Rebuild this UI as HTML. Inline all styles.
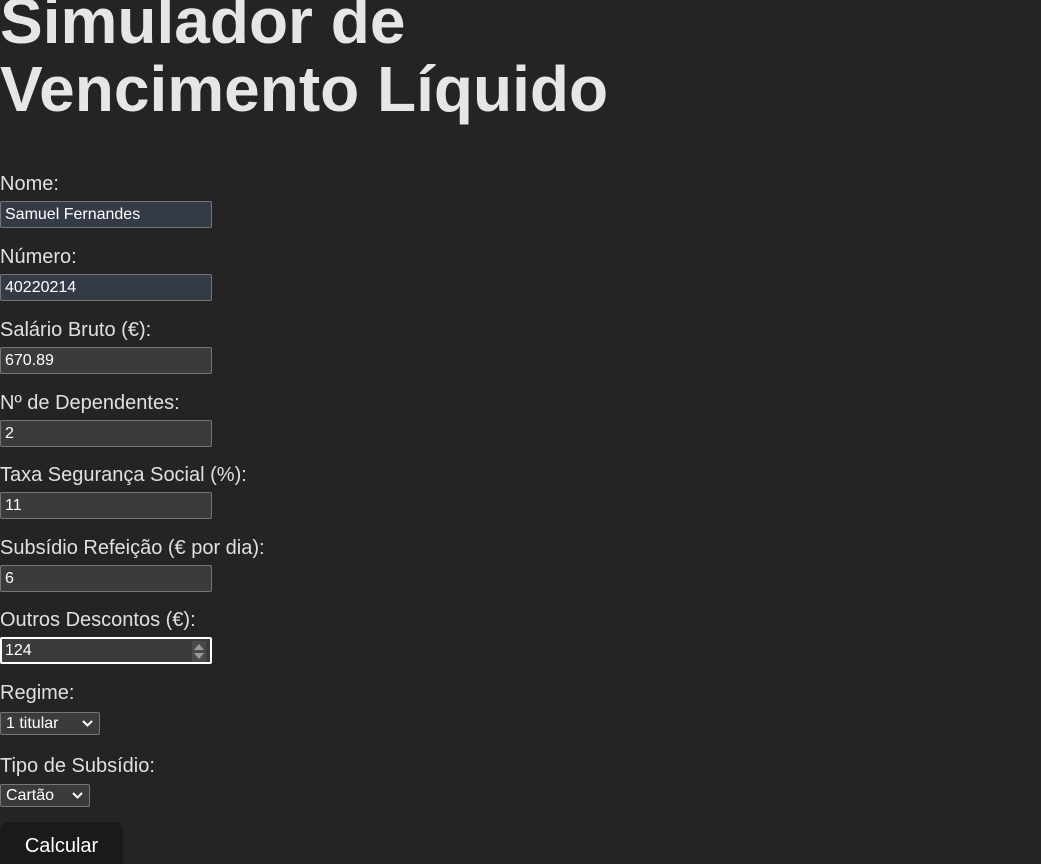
<!DOCTYPE html>
<html><head><meta charset="utf-8"><style>
html,body{margin:0;background:#242424;overflow:hidden;width:1041px;height:864px;}
body{font-family:"Liberation Sans",Arial,sans-serif;color:rgba(255,255,255,0.87);position:relative;}
h1{position:absolute;left:0;top:-13px;margin:0;font-size:64px;line-height:68px;font-weight:bold;color:#e6e6e6;white-space:nowrap;}
.l{position:absolute;left:0;font-size:20px;line-height:24px;color:#e0e0e0;}
.i{position:absolute;left:0;width:212px;height:27px;box-sizing:border-box;border:1px solid #767676;border-radius:2px;background:#3b3b3b;color:#fff;font-size:16px;line-height:25px;padding-left:4px;}
.b{background:#343a46;}
.f{border:2px solid #fff;padding-left:3px;line-height:23px;}
.s{position:absolute;left:0;height:23px;box-sizing:border-box;border:1px solid #767676;border-radius:2px;background:#3b3b3b;color:#fff;font-size:16px;line-height:21px;padding-left:5px;}
.s svg{position:absolute;right:6px;top:7px;}
.btn{position:absolute;left:0;top:822px;width:123px;height:50px;border-radius:8px;background:#1a1a1a;color:#fff;font-size:20px;text-align:center;line-height:48px;}
</style></head><body>
<h1>Simulador de<br>Vencimento Líquido</h1>
<div class="l" style="top:172px">Nome:</div>
<div class="i b" style="top:201px">Samuel Fernandes</div>
<div class="l" style="top:245px">Número:</div>
<div class="i b" style="top:274px">40220214</div>
<div class="l" style="top:318px">Salário Bruto (€):</div>
<div class="i" style="top:347px">670.89</div>
<div class="l" style="top:391px">Nº de Dependentes:</div>
<div class="i" style="top:420px">2</div>
<div class="l" style="top:463px">Taxa Segurança Social (%):</div>
<div class="i" style="top:492px">11</div>
<div class="l" style="top:536px">Subsídio Refeição (€ por dia):</div>
<div class="i" style="top:565px">6</div>
<div class="l" style="top:608px">Outros Descontos (€):</div>
<div class="i f" style="top:637px">124<svg style="position:absolute;right:4px;top:2px" width="14" height="21"><rect width="14" height="21" fill="#4a4a4a"/><path d="M2 9L7 3L12 9Z M2 12L7 18L12 12Z" fill="#9a9a9a"/></svg></div>
<div class="l" style="top:681px">Regime:</div>
<div class="s" style="top:712px;width:100px">1 titular<svg width="11" height="7"><path d="M1 1L5.5 5.5L10 1" stroke="#fff" stroke-width="2" fill="none"/></svg></div>
<div class="l" style="top:754px">Tipo de Subsídio:</div>
<div class="s" style="top:784px;width:90px">Cartão<svg width="11" height="7"><path d="M1 1L5.5 5.5L10 1" stroke="#fff" stroke-width="2" fill="none"/></svg></div>
<div class="btn">Calcular</div>
</body></html>
